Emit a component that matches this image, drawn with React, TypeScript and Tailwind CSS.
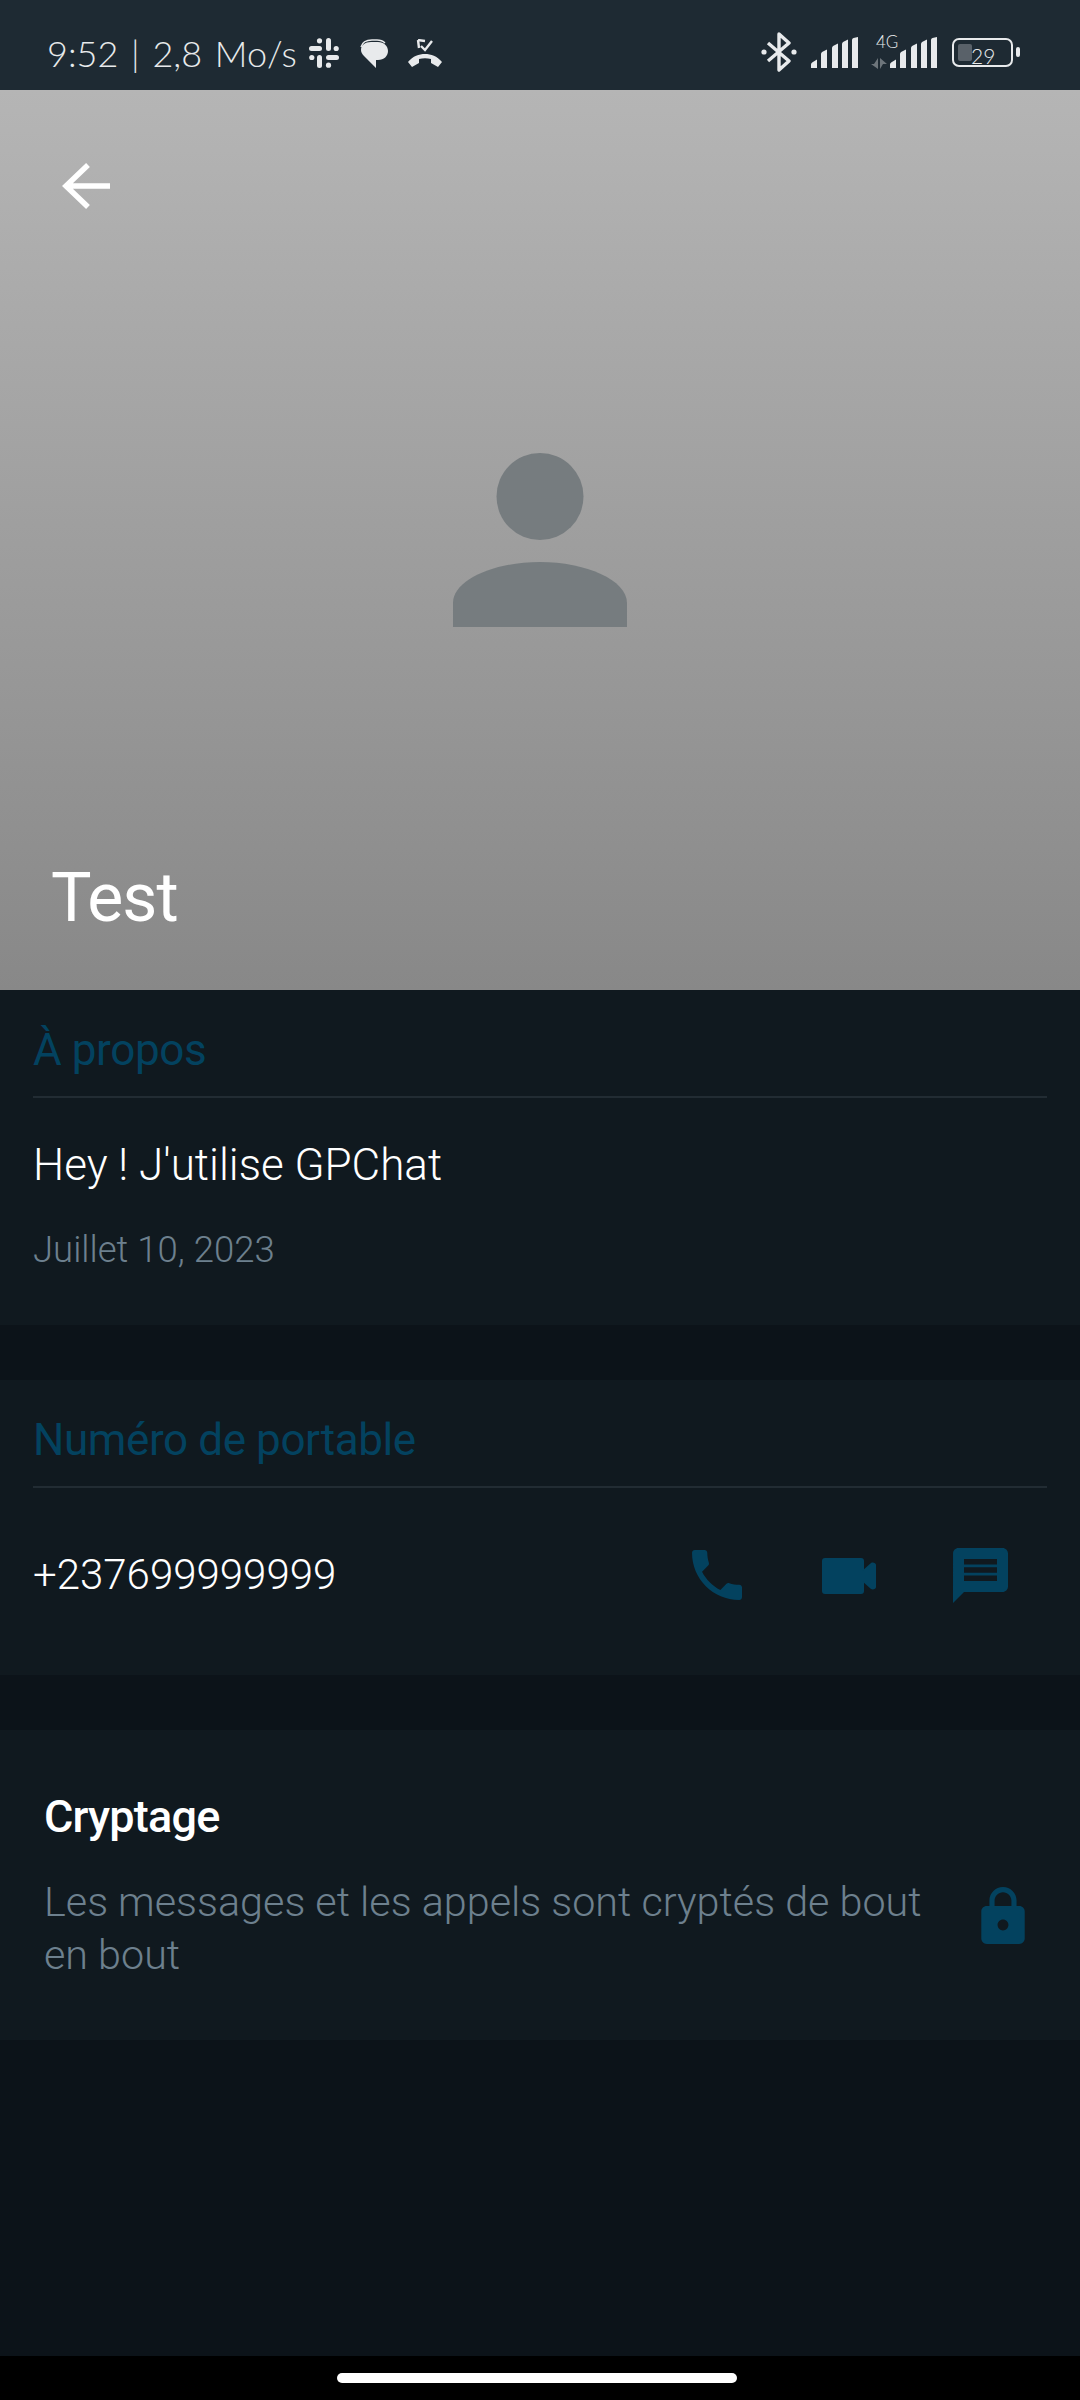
import React from 'react';

const BLUE = '#03425f';
const ICON = '#e8eaec';

function SignalBars() {
    return (
        <svg width="47" height="31" viewBox="0 0 47 31" fill={ICON}>
            <path d="M0 31v-3.5q0-1.5 1.5-2.3L6 22.5V31zM10 31V17q0-1.5 1.5-2.3L16 12.5V31zM21 31V11q0-1.5 1.5-2.3L27 6.5V31zM31 31V7q0-1.5 1.5-2.3L37 2.5V31zM41 31V3q0-1.5 1.5-2L47 0v31z" />
        </svg>
    );
}

function StatusBar() {
    return (
        <div className="h-[90px] bg-[#1e2a33] flex items-start justify-between pl-[47px] pr-[60px] pt-[36px] text-[#e8eaec]">
            <div className="flex items-center h-[34px]">
                <span className="font-['Lato'] text-[36px] leading-[34px] font-light whitespace-nowrap w-[262px] [word-spacing:3px]">9:52 | 2,8 Mo/s</span>
                <svg width="30" height="30" viewBox="0 0 30 30" fill={ICON}>
                    <rect x="0" y="8" width="13" height="5" rx="2.5" />
                    <circle cx="10.5" cy="2.8" r="2.6" />
                    <rect x="17" y="0" width="5" height="13" rx="2.5" />
                    <circle cx="27.2" cy="10.5" r="2.6" />
                    <rect x="17" y="17" width="13" height="5" rx="2.5" />
                    <circle cx="19.5" cy="27.2" r="2.6" />
                    <rect x="8" y="17" width="5" height="13" rx="2.5" />
                    <circle cx="2.8" cy="19.5" r="2.6" />
                </svg>
                <svg width="29" height="29" viewBox="0 0 29 29" fill="none" className="ml-[21px]">
                    <path d="M1 8c1-4 5-7 11-7h5c3 0 6 1 8 3" stroke={ICON} strokeWidth="1.4" />
                    <path d="M11 3h7c6 0 10 4 10 9s-4 9-10 9h-2v8L4 17C2 15 1 13 1 11c0-5 4-8 10-8z" fill={ICON} />
                </svg>
                <svg width="36" height="29" viewBox="0 0 36 29" fill="none" className="ml-[18px]">
                    <path d="M11 1l1 8M11 1l7 1" stroke={ICON} strokeWidth="2.4" />
                    <path d="M14 7l4 4 7-9" stroke={ICON} strokeWidth="2.4" />
                    <path d="M1 23c5-6 11-8 17-8s12 2 17 8l-4 5-7-4v-4c-4-1-8-1-12 0v4l-7 4z" fill={ICON} />
                </svg>
            </div>
            <div className="flex items-center h-[34px] -mt-[1px]">
                <svg width="36" height="40" viewBox="0 0 36 40" fill="none" stroke={ICON} strokeWidth="3.4" strokeLinejoin="round">
                    <path d="M7 11l21 18-10 9V2l10 9L7 29" />
                    <circle cx="3" cy="20" r="2.6" fill={ICON} stroke="none" />
                    <circle cx="33" cy="20" r="2.6" fill={ICON} stroke="none" />
                </svg>
                <div className="ml-[14px] mt-[1px]">
                    <SignalBars />
                </div>
                <div className="relative w-[19px] h-[34px] ml-[13px]">
                    <span className="absolute left-[5px] -top-[2px] font-['Lato'] text-[17px] leading-[18px] font-light">4G</span>
                    <svg width="16" height="11" viewBox="0 0 16 11" fill="#6d757b" className="absolute left-0 bottom-0">
                        <path d="M7 0v11L0 6h3zM9 0v11l3-5h4z" />
                    </svg>
                </div>
                <div className="mt-[1px]">
                    <SignalBars />
                </div>
                <div className="relative w-[61px] h-[29px] ml-[15px] border-[2px] border-[#e8eaec] rounded-[7px]">
                    <div className="absolute left-[4px] top-[4px] w-[14px] h-[17px] bg-[#596169] rounded-[2px]" />
                    <span className="absolute left-[17px] top-[5px] font-['Lato'] text-[21px] leading-[22px] font-light">29</span>
                </div>
                <div className="w-[4px] h-[10px] bg-[#e8eaec] rounded-[2px] ml-[3px]" />
            </div>
        </div>
    );
}

function Hero() {
    return (
        <div className="h-[900px] bg-gradient-to-b from-[#b5b5b5] to-[#888888] flex flex-col">
            <div className="pl-[62px] pt-[72px] h-[363px]">
                <svg width="48" height="48" viewBox="0 0 48 48" fill="none" stroke="white" strokeWidth="5.5">
                    <path d="M48 24H4M26 3L4 24l22 21" />
                </svg>
            </div>
            <div className="flex justify-center">
                <svg width="174" height="174" viewBox="0 0 174 174" fill="#767c7f">
                    <circle cx="87" cy="43.5" r="43.5" />
                    <path d="M0 174v-24c0-23 41-41 87-41s87 18 87 41v24z" />
                </svg>
            </div>
            <div className="pl-[51px] pt-[233px] text-white text-[68px] leading-[76px] font-['Roboto'] tracking-[-1px]">Test</div>
        </div>
    );
}

function SectionTitle({ children }: { children: React.ReactNode }) {
    return (
        <div className="mx-[33px] h-[108px] border-b-[2px] border-[#222c33] pt-[35px]">
            <div className="text-[#03425f] text-[44px] leading-[50px] font-['Roboto'] tracking-[-0.4px]">{children}</div>
        </div>
    );
}

export default function App() {
    return (
        <div className="w-[1080px] h-[2400px] bg-[#0c1319] flex flex-col font-['Roboto'] overflow-hidden">
            <StatusBar />
            <Hero />

            <div className="h-[335px] bg-[#10191f]">
                <SectionTitle>À propos</SectionTitle>
                <div className="pl-[33px] pt-[42px] text-white font-light text-[44px] leading-[50px]">Hey ! J'utilise GPChat</div>
                <div className="pl-[33px] pt-[39px] text-[#6d808e] font-light text-[36.5px] leading-[42px]">Juillet 10, 2023</div>
            </div>

            <div className="h-[295px] mt-[55px] bg-[#10191f]">
                <SectionTitle>Numéro de portable</SectionTitle>
                <div className="flex items-center justify-between pl-[33px] pr-[72px] h-[174px]">
                    <span className="text-white font-light text-[42px] leading-[50px]">+237699999999</span>
                    <div className="flex items-center">
                        <svg width="50" height="50" viewBox="3 3 18 18" fill={BLUE}>
                            <path d="M6.62 10.79c1.44 2.83 3.76 5.14 6.59 6.59l2.2-2.2c.27-.27.67-.36 1.02-.24 1.12.37 2.33.57 3.57.57.55 0 1 .45 1 1V20c0 .55-.45 1-1 1-9.39 0-17-7.61-17-17 0-.55.45-1 1-1h3.5c.55 0 1 .45 1 1 0 1.25.2 2.45.57 3.57.11.35.03.74-.25 1.02l-2.2 2.2z" />
                        </svg>
                        <svg width="54" height="36" viewBox="0 0 54 36" fill={BLUE} className="ml-[80px] mt-[1px]">
                            <rect x="0" y="0" width="42" height="36" rx="3" />
                            <path d="M40 13l9-8c2-1 5 0 5 2v22c0 2-3 3-5 2l-9-8z" />
                        </svg>
                        <svg width="55" height="55" viewBox="2 2 20 20" fill={BLUE} className="ml-[77px]">
                            <path d="M20 2H4c-1.1 0-1.99.9-1.99 2L2 22l4-4h14c1.1 0 2-.9 2-2V4c0-1.1-.9-2-2-2zm-2 12H6v-2h12v2zm0-3H6V9h12v2zm0-3H6V6h12v2z" />
                        </svg>
                    </div>
                </div>
            </div>

            <div className="h-[310px] mt-[55px] bg-[#10191f] pl-[44px] pr-[55px] pt-[62px]">
                <div className="text-white font-medium text-[45px] leading-[50px] tracking-[-0.8px]">Cryptage</div>
                <div className="flex items-start justify-between mt-[34px]">
                    <p className="w-[900px] text-[#6d808e] font-light text-[41.3px] leading-[53px]">Les messages et les appels sont cryptés de bout en bout</p>
                    <svg width="44" height="57" viewBox="4 1 16 21" fill={BLUE} className="mt-[11px]">
                        <path d="M18 8h-1V6c0-2.76-2.24-5-5-5S7 3.24 7 6v2H6c-1.1 0-2 .9-2 2v10c0 1.1.9 2 2 2h12c1.1 0 2-.9 2-2V10c0-1.1-.9-2-2-2zm-6 9c-1.1 0-2-.9-2-2s.9-2 2-2 2 .9 2 2-.9 2-2 2zm3.1-9H8.9V6c0-1.71 1.39-3.1 3.1-3.1 1.71 0 3.1 1.39 3.1 3.1v2z" />
                    </svg>
                </div>
            </div>

            <div className="flex-1" />

            <div className="h-[44px] bg-black flex justify-center pt-[17px] pr-[7px]">
                <div className="w-[400px] h-[10px] bg-white rounded-full" />
            </div>
        </div>
    );
}
